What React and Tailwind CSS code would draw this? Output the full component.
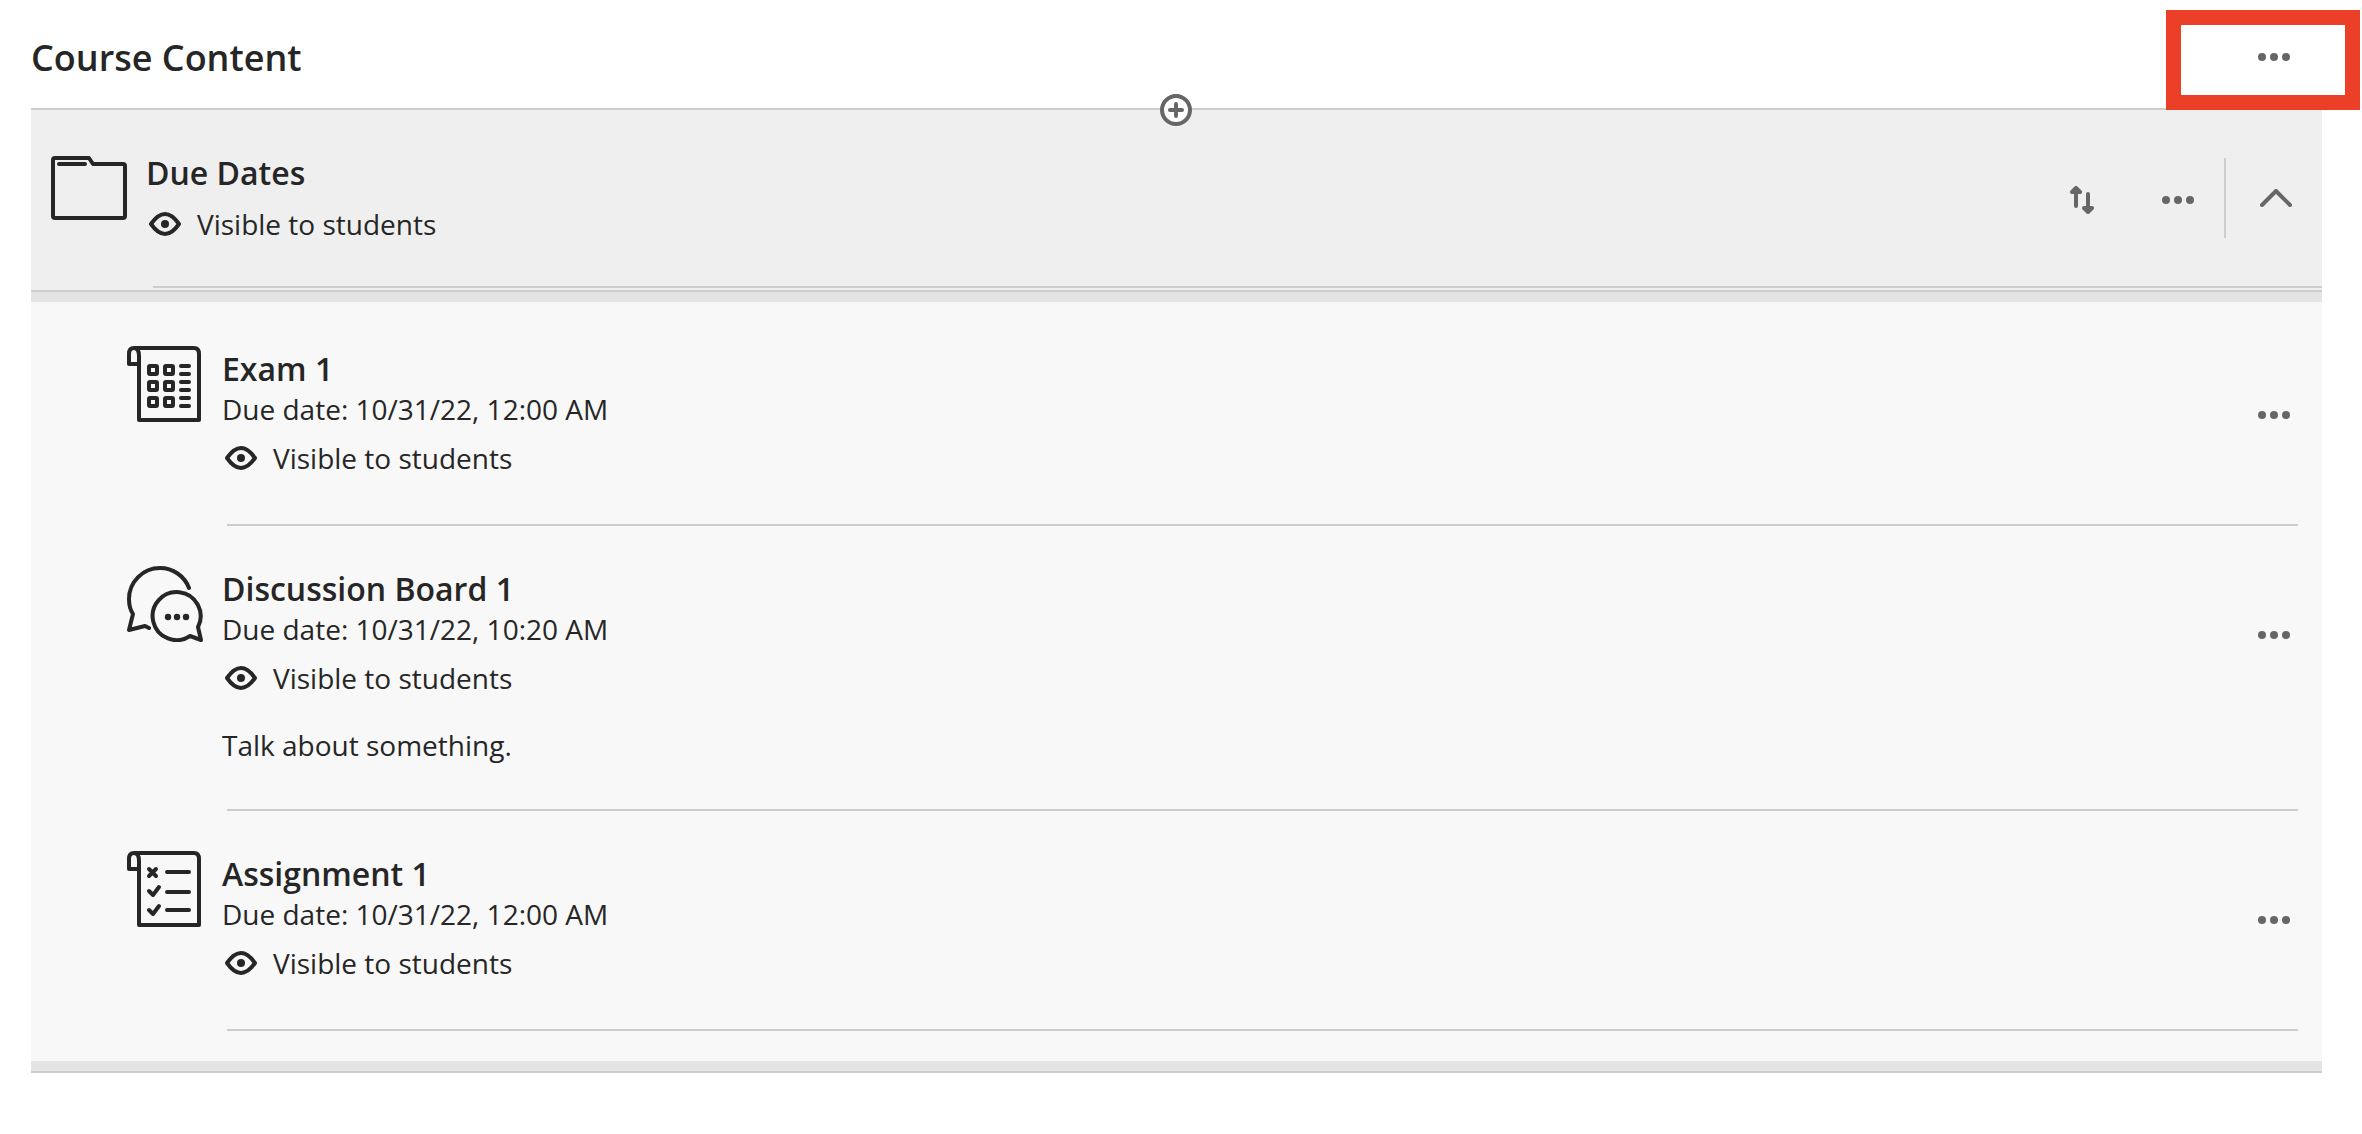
import React from "react";

const items = [
  {
    id: "exam",
    title: "Exam 1",
    due: "Due date: 10/31/22, 12:00 AM",
    icon: ExamIcon,
  },
  {
    id: "discussion",
    title: "Discussion Board 1",
    due: "Due date: 10/31/22, 10:20 AM",
    description: "Talk about something.",
    icon: DiscussionIcon,
  },
  {
    id: "assignment",
    title: "Assignment 1",
    due: "Due date: 10/31/22, 12:00 AM",
    icon: AssignmentIcon,
  },
];

function FolderIcon() {
  return (
    <svg width="76" height="64" viewBox="0 0 76 64" fill="none" stroke="currentColor" strokeWidth="4" strokeLinecap="round" strokeLinejoin="round" aria-hidden="true">
      <path d="M4 2H38L42 8H72Q74 8 74 10V60Q74 62 72 62H4Q2 62 2 60V4Q2 2 4 2Z" />
      <path d="M8 8H34" />
    </svg>
  );
}

// Scroll-shaped sheet shared by the exam and assignment icons
function Sheet({ children }) {
  return (
    <svg width="76" height="76" viewBox="0 0 76 76" fill="none" stroke="currentColor" strokeWidth="4" strokeLinecap="round" strokeLinejoin="round" aria-hidden="true">
      <path d="M7 2H67Q72 2 72 8V74H12V18H2V8Q2 2 7 2Q12 2 12 10V18" />
      {children}
    </svg>
  );
}

function ExamIcon() {
  return (
    <Sheet>
      {[18, 34, 50].map((y) => (
        <g key={y}>
          <rect x="22" y={y + 2} width="8" height="8" rx="1" />
          <rect x="38" y={y + 2} width="8" height="8" rx="1" />
          <path d={`M54 ${y + 2}H62M54 ${y + 10}H62`} />
        </g>
      ))}
    </Sheet>
  );
}

function AssignmentIcon() {
  return (
    <Sheet>
      <path d="M22 18L29 25M29 18L22 25M40 21H62M40 41H62M40 59H62" />
      <path d="M22 40L26 44L32 36M22 59L26 63L32 55" />
    </Sheet>
  );
}

function DiscussionIcon() {
  return (
    <svg width="76" height="76" viewBox="0 0 76 76" fill="none" stroke="currentColor" strokeWidth="4" strokeLinecap="round" strokeLinejoin="round" aria-hidden="true">
      <path d="M62 22A31 31 0 0 0 33 2A31 31 0 0 0 2 33Q2 42 6 48L2 64L18 60L22 62" />
      <path d="M71 61A24 24 0 1 0 63 70L74 74Z" />
      <g fill="currentColor" stroke="none">
        <circle cx="41" cy="51" r="3.2" />
        <circle cx="50" cy="51" r="3.2" />
        <circle cx="59" cy="51" r="3.2" />
      </g>
    </svg>
  );
}

function EyeIcon() {
  return (
    <svg width="32" height="24" viewBox="0 0 32 24" fill="none" stroke="currentColor" strokeWidth="4" strokeLinejoin="round" aria-hidden="true">
      <path d="M2 12Q9 2 16 2Q23 2 30 12Q23 22 16 22Q9 22 2 12Z" />
      <circle cx="16" cy="12" r="4" fill="currentColor" stroke="none" />
    </svg>
  );
}

function MoreButton({ label }) {
  return (
    <button type="button" aria-label={label} className="flex size-12 items-center justify-center">
      <svg width="32" height="8" viewBox="0 0 32 8" fill="currentColor" aria-hidden="true">
        <circle cx="4" cy="4" r="4" />
        <circle cx="16" cy="4" r="4" />
        <circle cx="28" cy="4" r="4" />
      </svg>
    </button>
  );
}

function Visibility() {
  return (
    <div className="flex items-center gap-4 pl-[3px] text-[28px] leading-10">
      <EyeIcon />
      <span>Visible to students</span>
    </div>
  );
}

function ContentItem({ item }) {
  const Icon = item.icon;
  return (
    <li className="flex pt-10 pr-6 pl-24">
      <Icon />
      <div className="ml-6 flex-1">
        <div className="-ml-[5px] pt-[3px] pb-[46px]">
          <h3 className="text-[32px] leading-10 font-semibold">{item.title}</h3>
          <p className="text-[28px] leading-10">{item.due}</p>
          <div className="mt-[9px]">
            <Visibility />
          </div>
          {item.description && (
            <p className="mt-[29px] text-[28px] leading-9">{item.description}</p>
          )}
        </div>
        <div className="h-[2px] bg-[#cdcdcd]" />
      </div>
      <div className="-ml-12 pt-[45px] text-[#666666]">
        <MoreButton label={`More options for ${item.title}`} />
      </div>
    </li>
  );
}

export default function App() {
  return (
    <main className="bg-white pr-10 pl-[31px] font-['Open_Sans',sans-serif] text-[#262626]">
      {/* Page heading */}
      <header className="relative flex h-[108px] items-center justify-between pt-[6px] pr-6">
        <h1 className="pt-[2px] text-[36px] leading-[48px] font-semibold">Course Content</h1>
        <div className="text-[#666666]">
          <MoreButton label="More options for course content" />
        </div>
        <div className="pointer-events-none absolute top-[10px] -right-[38px] z-10 h-[100px] w-[194px] border-[15px] border-[#eb3f27]" />
      </header>

      <section className="relative border-y-2 border-[#cdcdcd]">
        {/* Add content between rows */}
        <div className="absolute -top-4 right-px left-0 flex justify-center text-[#666666]">
          <button type="button" aria-label="Add content">
            <svg width="32" height="32" viewBox="0 0 32 32" fill="none" stroke="currentColor" strokeWidth="4" strokeLinecap="round" aria-hidden="true">
              <circle cx="16" cy="16" r="14" fill="#fff" />
              <path d="M10 16H22M16 10V22" />
            </svg>
          </button>
        </div>

        {/* Folder */}
        <div className="border-b-2 border-[#cdcdcd] bg-[#efefef] pb-[2px]">
          <div className="flex h-44 pl-5">
            <div className="pt-[46px]">
              <FolderIcon />
            </div>
            <div className="ml-[19px] flex-1 pt-[43px]">
              <h2 className="text-[32px] leading-10 font-semibold">Due Dates</h2>
              <div className="mt-[11px]">
                <Visibility />
              </div>
            </div>
            <div className="flex items-center pr-[22px] text-[#666666]">
              <div className="flex gap-12 pt-1">
                <button type="button" aria-label="Reorder" className="flex size-12 items-center justify-center">
                  <svg width="24" height="28" viewBox="0 0 24 28" fill="none" stroke="currentColor" strokeWidth="4" strokeLinecap="round" strokeLinejoin="round" aria-hidden="true">
                    <path d="M6 20V4M18 8V24" />
                    <path d="M2 6L6 2L10 6ZM14 22L18 26L22 22Z" fill="currentColor" />
                  </svg>
                </button>
                <MoreButton label="More options for Due Dates" />
              </div>
              <div className="ml-[22px] h-20 w-[2px] bg-[#cdcdcd]" />
              <button type="button" aria-label="Collapse Due Dates" className="ml-[26px] flex size-12 items-center justify-center">
                <svg width="32" height="18" viewBox="0 0 32 18" fill="none" stroke="currentColor" strokeWidth="4" strokeLinecap="round" strokeLinejoin="round" aria-hidden="true">
                  <path d="M2 16L16 2L30 16" />
                </svg>
              </button>
            </div>
          </div>
          <div className="ml-[122px] h-[2px] bg-[#cdcdcd]" />
        </div>

        {/* Folder contents */}
        <ul className="border-y-[10px] border-[#e4e4e4] bg-[#f8f8f8] pt-1 pb-[30px]">
          {items.map((item) => (
            <ContentItem key={item.id} item={item} />
          ))}
        </ul>
      </section>
    </main>
  );
}
